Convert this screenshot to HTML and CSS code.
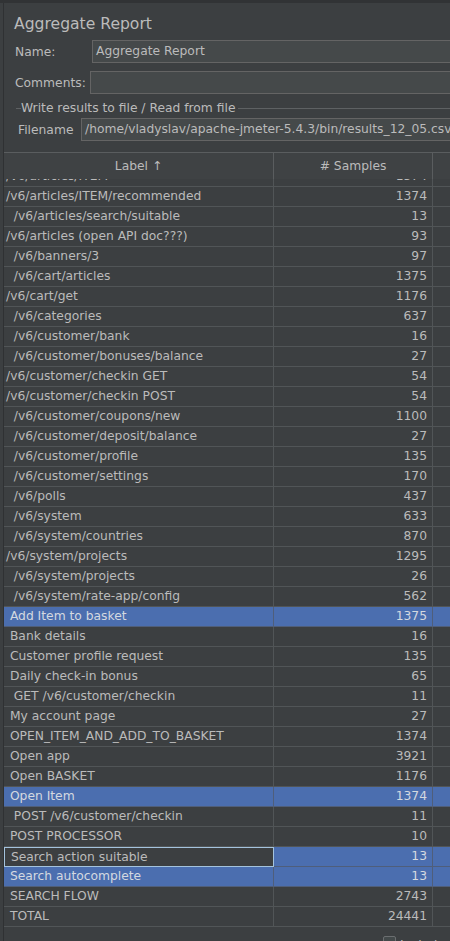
FILE: index.html
```html
<!DOCTYPE html>
<html>
<head>
<meta charset="utf-8">
<link rel="stylesheet" href="styles.css">
</head>
<body>
<div class="topstrip"></div>
<div class="frame">
  <div class="panel">
    <div class="title">Aggregate Report</div>
    <div class="form-row name-row">
      <div class="lbl lbl-name">Name:</div>
      <div class="field">Aggregate Report</div>
    </div>
    <div class="form-row comments-row">
      <div class="lbl lbl-comments">Comments:</div>
      <div class="field"></div>
    </div>
    <div class="titled">
      <span class="titled-lead"></span>
      <span class="titled-text">Write results to file / Read from file</span>
      <span class="titled-line"></span>
    </div>
    <div class="form-row file-row">
      <div class="lbl lbl-file">Filename</div>
      <div class="field">/home/vladyslav/apache-jmeter-5.4.3/bin/results_12_05.csv</div>
    </div>

    <div class="table">
      <div class="thead">
        <div class="th th-label">Label ↑</div>
        <div class="th th-num"># Samples</div>
        <div class="th th-rest"></div>
      </div>
      <div class="tbody">
        <div class="rows">
          <div class="row"><div class="td lab">/v6/articles/ITEM</div><div class="td num">1374</div><div class="td rest"></div></div>
          <div class="row"><div class="td lab">/v6/articles/ITEM/recommended</div><div class="td num">1374</div><div class="td rest"></div></div>
          <div class="row"><div class="td lab">  /v6/articles/search/suitable</div><div class="td num">13</div><div class="td rest"></div></div>
          <div class="row"><div class="td lab">/v6/articles (open API doc???)</div><div class="td num">93</div><div class="td rest"></div></div>
          <div class="row"><div class="td lab">  /v6/banners/3</div><div class="td num">97</div><div class="td rest"></div></div>
          <div class="row"><div class="td lab">  /v6/cart/articles</div><div class="td num">1375</div><div class="td rest"></div></div>
          <div class="row"><div class="td lab">/v6/cart/get</div><div class="td num">1176</div><div class="td rest"></div></div>
          <div class="row"><div class="td lab">  /v6/categories</div><div class="td num">637</div><div class="td rest"></div></div>
          <div class="row"><div class="td lab">  /v6/customer/bank</div><div class="td num">16</div><div class="td rest"></div></div>
          <div class="row"><div class="td lab">  /v6/customer/bonuses/balance</div><div class="td num">27</div><div class="td rest"></div></div>
          <div class="row"><div class="td lab">/v6/customer/checkin GET</div><div class="td num">54</div><div class="td rest"></div></div>
          <div class="row"><div class="td lab">/v6/customer/checkin POST</div><div class="td num">54</div><div class="td rest"></div></div>
          <div class="row"><div class="td lab">  /v6/customer/coupons/new</div><div class="td num">1100</div><div class="td rest"></div></div>
          <div class="row"><div class="td lab">  /v6/customer/deposit/balance</div><div class="td num">27</div><div class="td rest"></div></div>
          <div class="row"><div class="td lab">  /v6/customer/profile</div><div class="td num">135</div><div class="td rest"></div></div>
          <div class="row"><div class="td lab">  /v6/customer/settings</div><div class="td num">170</div><div class="td rest"></div></div>
          <div class="row"><div class="td lab">  /v6/polls</div><div class="td num">437</div><div class="td rest"></div></div>
          <div class="row"><div class="td lab">  /v6/system</div><div class="td num">633</div><div class="td rest"></div></div>
          <div class="row"><div class="td lab">  /v6/system/countries</div><div class="td num">870</div><div class="td rest"></div></div>
          <div class="row"><div class="td lab">/v6/system/projects</div><div class="td num">1295</div><div class="td rest"></div></div>
          <div class="row"><div class="td lab">  /v6/system/projects</div><div class="td num">26</div><div class="td rest"></div></div>
          <div class="row"><div class="td lab">  /v6/system/rate-app/config</div><div class="td num">562</div><div class="td rest"></div></div>
          <div class="row sel"><div class="td lab"> Add Item to basket</div><div class="td num">1375</div><div class="td rest"></div></div>
          <div class="row"><div class="td lab"> Bank details</div><div class="td num">16</div><div class="td rest"></div></div>
          <div class="row"><div class="td lab"> Customer profile request</div><div class="td num">135</div><div class="td rest"></div></div>
          <div class="row"><div class="td lab"> Daily check-in bonus</div><div class="td num">65</div><div class="td rest"></div></div>
          <div class="row"><div class="td lab">  GET /v6/customer/checkin</div><div class="td num">11</div><div class="td rest"></div></div>
          <div class="row"><div class="td lab"> My account page</div><div class="td num">27</div><div class="td rest"></div></div>
          <div class="row"><div class="td lab"> OPEN_ITEM_AND_ADD_TO_BASKET</div><div class="td num">1374</div><div class="td rest"></div></div>
          <div class="row"><div class="td lab"> Open app</div><div class="td num">3921</div><div class="td rest"></div></div>
          <div class="row"><div class="td lab"> Open BASKET</div><div class="td num">1176</div><div class="td rest"></div></div>
          <div class="row sel"><div class="td lab"> Open Item</div><div class="td num">1374</div><div class="td rest"></div></div>
          <div class="row"><div class="td lab">  POST /v6/customer/checkin</div><div class="td num">11</div><div class="td rest"></div></div>
          <div class="row"><div class="td lab"> POST PROCESSOR</div><div class="td num">10</div><div class="td rest"></div></div>
          <div class="row sel focus"><div class="td lab"> Search action suitable</div><div class="td num">13</div><div class="td rest"></div></div>
          <div class="row sel"><div class="td lab"> Search autocomplete</div><div class="td num">13</div><div class="td rest"></div></div>
          <div class="row"><div class="td lab"> SEARCH FLOW</div><div class="td num">2743</div><div class="td rest"></div></div>
          <div class="row"><div class="td lab"> TOTAL</div><div class="td num">24441</div><div class="td rest"></div></div>
        </div>
      </div>
    </div>
    <div class="bottom">
      <span class="check"></span>
      <span class="check-label">Include group name in label?</span>
    </div>
  </div>
</div>
</body>
</html>
```
FILE: styles.css
```css
html, body {
  margin: 0;
  padding: 0;
  height: 941px;
  overflow: hidden;
  background: #3c3f41;
  font-family: "DejaVu Sans", sans-serif;
  color: #bbbbbb;
}

.topstrip {
  height: 3px;
  background: #313335;
}

.frame {
  padding-left: 3px;
}

.panel {
  border-left: 1px solid #2f3133;
  height: 938px;
  overflow: hidden;
}

.title {
  height: 30px;
  line-height: 30px;
  margin-top: 6px;
  padding-left: 10px;
  font-size: 15.6px;
  color: #bbbbbb;
}

.form-row {
  display: flex;
  align-items: center;
  height: 23px;
  font-size: 12.3px;
}

.name-row { margin-top: 1px; }
.comments-row { margin-top: 8px; }
.file-row { margin-top: 1px; }

.lbl {
  flex: none;
  white-space: nowrap;
  box-sizing: border-box;
}

.lbl-name { padding-left: 11px; width: 88px; }
.lbl-comments { padding-left: 11px; width: 86px; }
.lbl-file { padding-left: 14px; width: 77px; }

.field {
  flex: 1;
  height: 23px;
  box-sizing: border-box;
  margin-right: -20px;
  border: 1px solid #646464;
  background: #45494a;
  padding-left: 3px;
  line-height: 21px;
  white-space: nowrap;
  overflow: hidden;
  color: #bbbbbb;
}

.titled {
  display: flex;
  align-items: center;
  height: 18px;
  margin-top: 5px;
  font-size: 12.3px;
}

.titled-lead {
  width: 5px;
  margin-left: 12px;
  height: 1px;
  background: #5e6163;
}

.titled-text {
  padding: 0 1px 0 0;
  white-space: nowrap;
}

.titled-line {
  flex: 1;
  height: 1px;
  background: #5e6163;
  margin-left: 2px;
}

.table {
  margin-top: 11px;
  width: 560px;
  font-size: 12.3px;
}

.thead {
  display: grid;
  grid-template-columns: 270px 159px 131px;
  height: 27px;
  box-sizing: border-box;
  border-top: 1px solid #5a5d5f;
  background: #3f4244;
}

.th {
  border-right: 1px solid #5a5d5f;
  text-align: center;
  line-height: 26px;
  white-space: nowrap;
}

.tbody {
  height: 749px;
  overflow: hidden;
}

.rows {
  margin-top: -12px;
}

.row {
  display: grid;
  grid-template-columns: 270px 159px 131px;
  height: 20px;
}

.td {
  box-sizing: border-box;
  height: 20px;
  border-right: 1px solid #515557;
  border-bottom: 1px solid #515557;
  line-height: 19px;
  white-space: pre;
  overflow: hidden;
}

.lab {
  padding-left: 2px;
}

.num {
  text-align: right;
  padding-right: 5px;
}

.row.sel .td {
  background: #4b6eaf;
  color: #d4d9e0;
  border-bottom-color: #4f5e7a;
  border-right-color: #4f5e7a;
}

.row.focus .lab {
  background: #3c3f41;
  color: #bbbbbb;
  border: 1px solid #a4c3dd;
}

.bottom {
  display: flex;
  align-items: flex-start;
  padding-left: 379px;
  margin-top: 8px;
  font-size: 12.3px;
}

.check {
  flex: none;
  width: 13px;
  height: 13px;
  box-sizing: border-box;
  border: 1px solid #6b6e70;
  background: #43494a;
  border-radius: 2px;
}

.check-label {
  margin-left: 4px;
  white-space: nowrap;
  line-height: 14px;
  margin-top: 2px;
}
```
